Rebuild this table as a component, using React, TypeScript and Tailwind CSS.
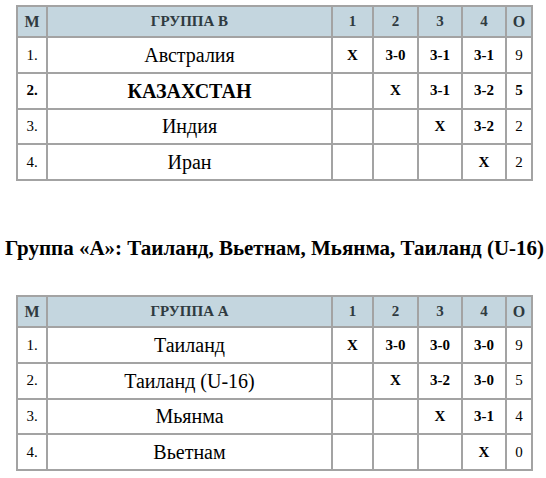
import React from "react";

type Row = { n: string; name: string; c: string[]; o: string; bold?: boolean };

const groupB: Row[] = [
  { n: "1.", name: "Австралия", c: ["X", "3-0", "3-1", "3-1"], o: "9" },
  { n: "2.", name: "КАЗАХСТАН", c: ["", "X", "3-1", "3-2"], o: "5", bold: true },
  { n: "3.", name: "Индия", c: ["", "", "X", "3-2"], o: "2" },
  { n: "4.", name: "Иран", c: ["", "", "", "X"], o: "2" },
];

const groupA: Row[] = [
  { n: "1.", name: "Таиланд", c: ["X", "3-0", "3-0", "3-0"], o: "9" },
  { n: "2.", name: "Таиланд (U-16)", c: ["", "X", "3-2", "3-0"], o: "5" },
  { n: "3.", name: "Мьянма", c: ["", "", "X", "3-1"], o: "4" },
  { n: "4.", name: "Вьетнам", c: ["", "", "", "X"], o: "0" },
];

const cell = "border-2 border-[#a3a3a3] p-0 text-center align-middle";
const head = "border-2 border-[#a3a3a3] bg-[#c4d6df] text-[#2f3a40] font-bold p-0 text-center text-[15px]";

function Table({ title, rows }: { title: string; rows: Row[] }) {
  return (
    <table className="border-collapse table-fixed w-[515px] ml-[16px]">
      <colgroup>
        <col className="w-[30px]" />
        <col className="w-[285px]" />
        <col className="w-[41px]" />
        <col className="w-[45px]" />
        <col className="w-[44px]" />
        <col className="w-[44px]" />
        <col className="w-[26px]" />
      </colgroup>
      <thead>
        <tr className="h-[31px]">
          <th className={`${head} text-[16px]`}>M</th>
          <th className={head}>{title}</th>
          <th className={head}>1</th>
          <th className={head}>2</th>
          <th className={head}>3</th>
          <th className={head}>4</th>
          <th className={`${head} text-[16px]`}>O</th>
        </tr>
      </thead>
      <tbody>
        {rows.map((r) => (
          <tr key={r.n} className="h-[35.75px]">
            <td className={`${cell} text-[15px] ${r.bold ? "font-bold" : ""}`}>{r.n}</td>
            <td className={`${cell} text-[20px] ${r.bold ? "font-bold" : ""}`}>{r.name}</td>
            {r.c.map((v, i) => (
              <td key={i} className={`${cell} text-[15px] font-bold`}>
                {v}
              </td>
            ))}
            <td className={`${cell} text-[15px] ${r.bold ? "font-bold" : ""}`}>{r.o}</td>
          </tr>
        ))}
      </tbody>
    </table>
  );
}

export default function App() {
  return (
    <div className="w-[546px] h-[478px] bg-white text-black pt-[5px] font-['Liberation_Serif','Times_New_Roman',serif]">
      <Table title="ГРУППА В" rows={groupB} />
      <div className="h-[114px] flex items-center pl-[5px] text-[21px] leading-none font-bold whitespace-nowrap pt-[20px]">
        Группа «А»: Таиланд, Вьетнам, Мьянма, Таиланд (U-16)
      </div>
      <Table title="ГРУППА А" rows={groupA} />
    </div>
  );
}
